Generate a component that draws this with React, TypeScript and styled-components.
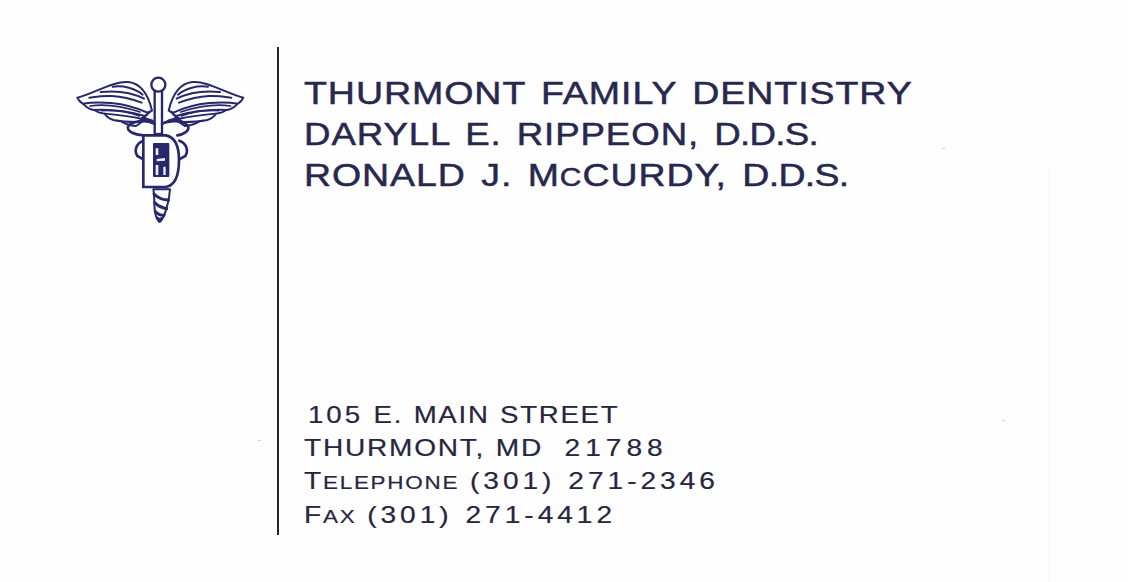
import React from 'react';
import styled, { createGlobalStyle } from 'styled-components';

const GlobalStyle = createGlobalStyle`
  html, body {
    margin: 0;
    padding: 0;
    background: #fefefe;
  }
`;

const Page = styled.div`
  position: relative;
  box-sizing: border-box;
  width: 1128px;
  height: 582px;
  padding: 47px 0;
  display: flex;
  overflow: hidden;
  background: #fefefe;
  font-family: 'Liberation Sans', Arial, sans-serif;
`;

const LogoColumn = styled.div`
  width: 277px;
  flex: none;
  padding: 13px 0 0 60px;
  box-sizing: border-box;
`;

const TextColumn = styled.div`
  flex: 1;
  box-sizing: border-box;
  border-left: 2px solid #23243a;
  padding: 26px 0 4px 25px;
  display: flex;
  flex-direction: column;
  justify-content: space-between;
`;

const Line = styled.div<{ $stretch: number; $spacing: number; $indent?: number }>`
  white-space: pre;
  transform-origin: left center;
  transform: scaleX(${(p) => p.$stretch});
  letter-spacing: ${(p) => p.$spacing}px;
  margin-left: ${(p) => p.$indent ?? 0}px;
`;

const Heading = styled(Line)`
  font-size: 32px;
  line-height: 41px;
  word-spacing: 3.5px;
  color: #28284f;
  -webkit-text-stroke: 0.5px #28284f;
`;

const Address = styled(Line)`
  font-size: 24px;
  line-height: 33.3px;
  word-spacing: 1px;
  color: #26263f;
  -webkit-text-stroke: 0.2px #26263f;
`;

const Small = styled.span`
  font-size: 0.8em;
  line-height: 0;
`;

const Wide = styled.span<{ $spacing: number }>`
  letter-spacing: ${(p) => p.$spacing}px;
`;

const ScanEdge = styled.div`
  position: absolute;
  left: 1049px;
  top: 165px;
  bottom: 0;
  width: 1px;
  background: #f5f5f5;
`;

const Speck = styled.div<{ $x: number; $y: number }>`
  position: absolute;
  left: ${(p) => p.$x}px;
  top: ${(p) => p.$y}px;
  width: 3px;
  height: 1px;
  background: #cfcfcf;
`;

const NAVY = '#27276b';

const Wing = () => (
  <g fill="#fff" stroke={NAVY} strokeWidth="6" strokeLinejoin="round" strokeLinecap="round">
    {/* feathers, lowest first so each one overlaps the next */}
    <path d="M172 172 C195 174 225 176 254 180 L228 198 C212 198 198 192 190 188 C182 184 176 178 172 172 Z" />
    <path d="M132 158 C170 156 215 160 256 172 L232 186 C205 186 180 184 160 180 C146 176 138 168 132 158 Z" />
    <path d="M98 144 C150 138 215 146 262 164 L244 176 C205 168 165 164 128 160 C114 158 104 152 98 144 Z" />
    <path d="M68 128 C120 118 190 122 270 156 L254 168 C200 152 140 148 100 150 C85 146 74 138 68 128 Z" />
    <path d="M52 113 C100 102 160 62 205 66 C240 70 264 100 276 152 L262 158 C190 124 110 124 68 131 C60 126 55 120 52 113 Z" />
    <path fill="none" strokeWidth="6" d="M88 113 C125 108 170 100 245 128 M122 96 C160 92 205 92 252 116 M158 80 C190 76 225 84 248 104" />
    <path fill="none" strokeWidth="5" d="M90 138 C130 132 185 138 240 156 M125 152 C165 150 205 156 238 168" />
  </g>
);

const Emblem = () => (
  <svg width="200" height="170" viewBox="0 0 600 510">
    <Wing />
    <g transform="matrix(-1 0 0 1 602 0)">
      <Wing />
    </g>
    <rect x="284" y="92" width="22" height="130" fill="#fff" stroke={NAVY} strokeWidth="7" />
    <circle cx="295" cy="74" r="21" fill="#fff" stroke={NAVY} strokeWidth="7" />
    <g fill="none" stroke={NAVY} strokeWidth="8" strokeLinecap="round">
      <path d="M284 192 C262 178 214 182 204 200 C200 214 222 224 250 226 M250 242 C228 250 222 272 232 288 L250 298" />
      <path d="M306 192 C328 178 372 182 384 198 C390 214 368 224 352 226 M358 242 C380 250 386 272 376 288 L358 298" />
      <path d="M250 176 L276 184 M352 176 L326 184" strokeWidth="11" />
    </g>
    <path
      d="M250 226 L318 226 C348 232 357 260 357 300 C357 350 344 376 318 381 L250 381 Z"
      fill="#fff"
      stroke={NAVY}
      strokeWidth="8"
      strokeLinejoin="miter"
    />
    <rect x="279" y="249" width="49" height="102" rx="3" fill={NAVY} />
    <path
      d="M287 265 H295 V285 H287 Z M290 297 L315 294 L315 302 L290 304 Z M287 315 H295 V345 H287 Z M310 320 H317 V345 H310 Z"
      fill="#eef0f8"
    />
    <path
      d="M280 388 L330 388 C328 410 322 440 314 462 C308 476 302 486 298 486 C292 480 286 466 284 450 C282 428 284 408 280 388 Z"
      fill="#fff"
      stroke={NAVY}
      strokeWidth="6"
      strokeLinejoin="round"
    />
    <g fill="none" stroke={NAVY} strokeWidth="9" strokeLinecap="round">
      <path d="M282 402 C294 414 312 420 326 420 M284 428 C294 438 308 444 320 446 M286 454 C292 462 304 466 312 466 M292 474 C296 478 300 480 304 476" />
    </g>
  </svg>
);

export default function App() {
  return (
    <Page>
      <GlobalStyle />
      <LogoColumn>
        <Emblem />
      </LogoColumn>
      <TextColumn>
        <div>
          <Heading $stretch={1.173} $spacing={0.8}>THURMONT FAMILY DENTISTRY</Heading>
          <Heading $stretch={1.145} $spacing={0.8}>DARYLL E. RIPPEON, <Wide $spacing={-0.6}>D.D.S.</Wide></Heading>
          <Heading $stretch={1.171} $spacing={0.8}>RONALD J. M<Small>C</Small>CURDY, <Wide $spacing={-0.6}>D.D.S.</Wide></Heading>
        </div>
        <div>
          <Address $stretch={1.15} $spacing={1.5} $indent={4}><Wide $spacing={2.6}>105</Wide> E. MAIN STREET</Address>
          <Address $stretch={1.17} $spacing={1.5}>THURMONT, MD  <Wide $spacing={4.3}>21788</Wide></Address>
          <Address $stretch={1.17} $spacing={1.5}>T<Small>ELEPHONE</Small> <Wide $spacing={3.4}>(301) 271-2346</Wide></Address>
          <Address $stretch={1.17} $spacing={1.5}>F<Small>AX</Small> <Wide $spacing={3.4}>(301) 271-4412</Wide></Address>
        </div>
      </TextColumn>
      <ScanEdge />
      <Speck $x={942} $y={148} />
      <Speck $x={1002} $y={420} />
      <Speck $x={258} $y={440} />
    </Page>
  );
}
